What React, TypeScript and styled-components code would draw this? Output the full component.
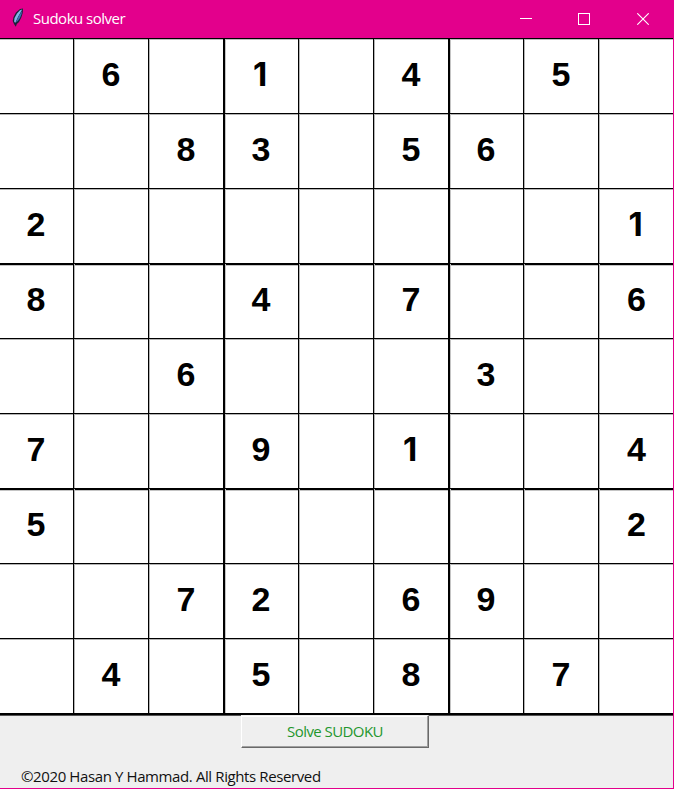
import React from "react";
import styled, { createGlobalStyle } from "styled-components";

const GlobalStyle = createGlobalStyle`
  * { box-sizing: border-box; }
  html, body { margin: 0; padding: 0; overflow: hidden; }
`;

const Window = styled.div`
  width: 674px;
  height: 789px;
  display: flex;
  flex-direction: column;
  background: #efefef;
  border-right: 1px solid #e3008c;
  border-bottom: 1px solid #e3008c;
  font-family: "Open Sans", "Noto Sans", sans-serif;
`;

const TitleBar = styled.header`
  height: 38px;
  margin-right: -1px;
  flex: none;
  display: flex;
  align-items: center;
  background: #e3008c;
  color: #fff;
`;

const Feather = styled.svg`
  flex: none;
  margin-left: 10px;
  width: 16px;
  height: 22px;
`;

const Title = styled.h1`
  margin: 0 auto 0 7px;
  padding-bottom: 2px;
  font-size: 15px;
  font-weight: 400;
  line-height: 20px;
  letter-spacing: -0.5px;
  white-space: nowrap;
`;

const ControlButton = styled.button<{ $width: number }>`
  width: ${(p) => p.$width}px;
  height: 38px;
  padding: 0;
  border: 0;
  background: transparent;
  color: #fff;
  display: flex;
  align-items: center;
  justify-content: center;
`;

const Controls = styled.div`
  display: flex;
  margin-right: 2px;
`;

const Board = styled.main`
  flex: none;
  display: grid;
  grid-template-columns: 74px repeat(7, 75px) 74px;
  grid-template-rows: repeat(9, 75px);
  border-top: 1px solid #000;
  border-bottom: 1px solid #000;
  background: #fff;
`;

const lineShadow = (index: number, axis: "x" | "y") => {
  const offset = (size: number) => (axis === "x" ? `${size}px 0` : `0 ${size}px`);
  if (index === 0) return `inset ${offset(axis === "y" ? 1 : 0)} #bdbdbd`;
  return index % 3 === 0
    ? `inset ${offset(1)} #000, inset ${offset(2)} #c4c4c4`
    : `inset ${offset(1)} #b4b4b4`;
};

const Cell = styled.div<{ $col: number; $row: number }>`
  display: flex;
  align-items: center;
  justify-content: center;
  border-right: ${(p) => (p.$col < 8 ? "1px solid #000" : "0")};
  border-bottom: 1px solid #000;
  box-shadow: ${(p) => lineShadow(p.$col, "x")}, ${(p) => lineShadow(p.$row, "y")};
  padding: 0 ${(p) => (p.$col === 0 ? 1 : 0)}px 4px ${(p) => (p.$col === 8 ? 1 : 0)}px;
  color: #000;
`;

const Digit = styled.span<{ $one: boolean }>`
  font-family: ${(p) => (p.$one ? "Inter" : '"Liberation Sans"')}, Arial, sans-serif;
  font-size: ${(p) => (p.$one ? 33 : 34)}px;
  font-weight: bold;
  line-height: 38px;
  padding-right: ${(p) => (p.$one ? 2 : 0)}px;
`;

const Footer = styled.footer`
  flex: 1;
  display: flex;
  flex-direction: column;
  box-shadow: inset 0 1px #555;
`;

const SolveButton = styled.button`
  width: 188px;
  height: 33px;
  margin: 0 0 0 241px;
  padding: 0 0 2px;
  border: 1px solid;
  border-color: transparent #696969 #696969 #fff;
  background: #efefef;
  box-shadow: inset -1px -1px #a0a0a0, inset 0 1px #fff;
  color: #23962d;
  font: 400 15px/20px "Open Sans", "Noto Sans", sans-serif;
  letter-spacing: -0.57px;
`;

const Copyright = styled.p`
  margin: 18px 0 0 21px;
  color: #111;
  font-size: 15px;
  line-height: 20px;
  letter-spacing: -0.39px;
  white-space: nowrap;
`;

const puzzle = [
  " 6 1 4 5 ",
  "  83 56  ",
  "2       1",
  "8  4 7  6",
  "  6   3  ",
  "7  9 1  4",
  "5       2",
  "  72 69  ",
  " 4 5 8 7 ",
];

export default function App() {
  return (
    <Window>
      <GlobalStyle />
      <TitleBar>
        <Feather viewBox="0 0 16 22">
          <path d="M13 .5 10 1 6 4.5 3.5 9 2.7 13 4 16 5.8 18.8 6.8 16 9 14 11.3 9.5 12.7 5Z" fill="#1b2038" />
          <path d="M12.2 1.5 10 2.2 7 5.5 4.5 10 4.1 13.5 5.2 15 8 9Z" fill="#80b7e8" />
          <path d="M12 3 11.6 6 10 10 7.8 13 5.8 14.5 9 7.5Z" fill="#3e70b8" />
        </Feather>
        <Title>Sudoku solver</Title>
        <Controls>
          <ControlButton $width={56} aria-label="Minimize">
            <svg width="12" height="12" shapeRendering="crispEdges"><path d="M0 5.5H12" stroke="currentColor" /></svg>
          </ControlButton>
          <ControlButton $width={60} aria-label="Maximize">
            <svg width="12" height="12"><rect x=".5" y=".5" width="11" height="11" fill="none" stroke="currentColor" /></svg>
          </ControlButton>
          <ControlButton $width={58} aria-label="Close">
            <svg width="12" height="12"><path d="M.3.3 11.7 11.7M11.7.3.3 11.7" stroke="currentColor" strokeWidth="1.1" /></svg>
          </ControlButton>
        </Controls>
      </TitleBar>
      <Board>
        {puzzle.flatMap((line, row) =>
          [...line].map((digit, col) => (
            <Cell key={`${row}-${col}`} $row={row} $col={col}>
              {digit !== " " && <Digit $one={digit === "1"}>{digit}</Digit>}
            </Cell>
          ))
        )}
      </Board>
      <Footer>
        <SolveButton>Solve SUDOKU</SolveButton>
        <Copyright>©2020 Hasan Y Hammad. All Rights Reserved</Copyright>
      </Footer>
    </Window>
  );
}
